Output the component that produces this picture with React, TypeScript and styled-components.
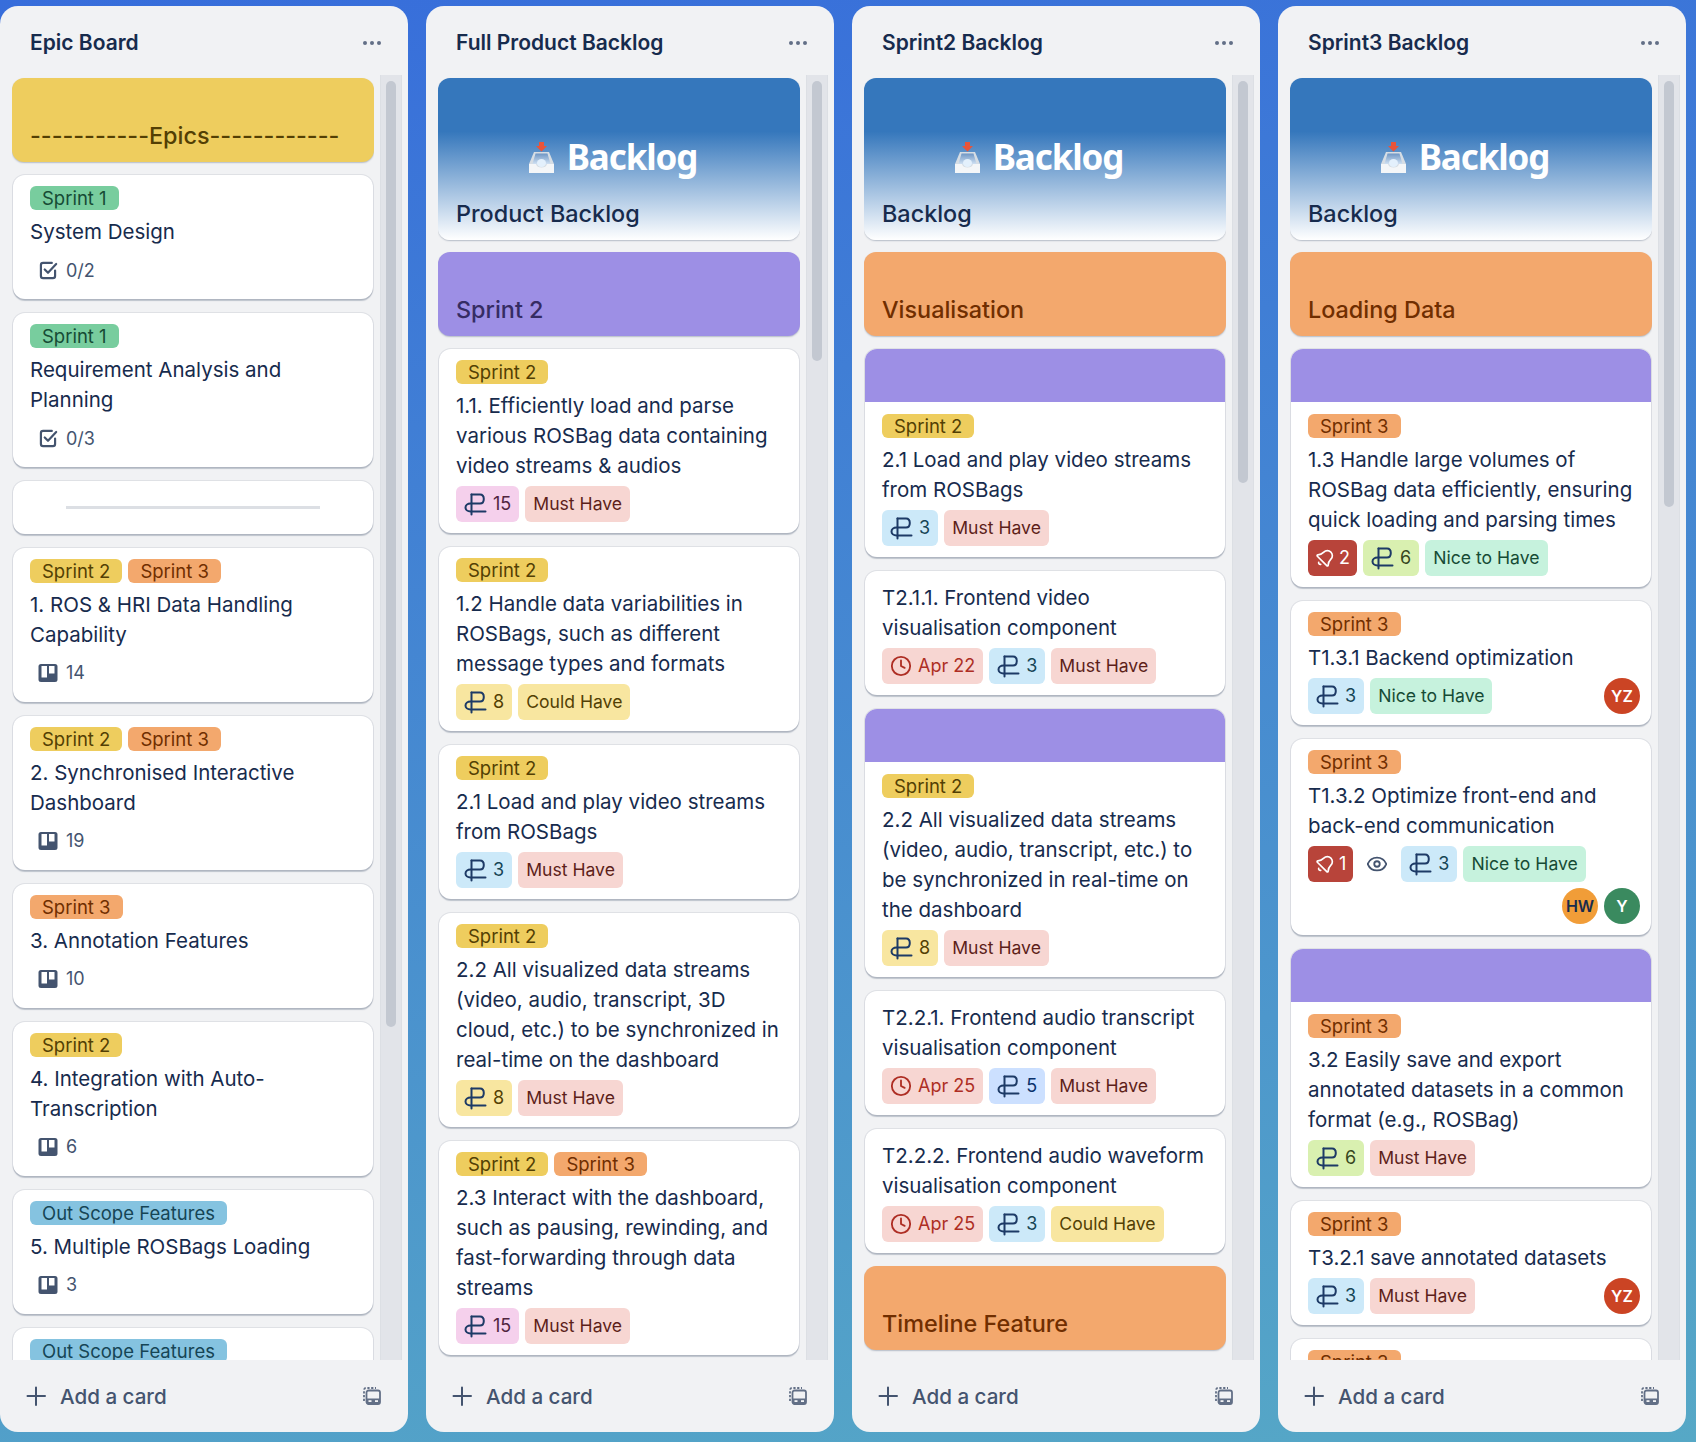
import React from 'react';
import styled, { createGlobalStyle } from 'styled-components';
import { Bell, Clock, Eye } from 'lucide-react';

type LabelTone = 'green' | 'yellow' | 'orange' | 'blue';
type ChipTone = 'pink' | 'blue' | 'green' | 'yellow' | 'periwinkle';
type Priority = 'Must Have' | 'Could Have' | 'Nice to Have';

interface CardData {
  kind?: 'card' | 'front' | 'backlog' | 'divider';
  tone?: 'yellow' | 'purple' | 'orange';
  cover?: boolean;
  labels?: [string, LabelTone][];
  title?: string;
  check?: string;
  board?: string;
  alerts?: string;
  watching?: boolean;
  date?: string;
  estimate?: [string, ChipTone];
  priority?: Priority;
  members?: [string, string, string][];
}

interface ListData {
  name: string;
  thumb: number;
  cards: CardData[];
}

const S1: [string, LabelTone] = ['Sprint 1', 'green'];
const S2: [string, LabelTone] = ['Sprint 2', 'yellow'];
const S3: [string, LabelTone] = ['Sprint 3', 'orange'];
const OUT: [string, LabelTone] = ['Out Scope Features', 'blue'];
const YZ: [string, string, string] = ['YZ', '#cb4424', '#ffffff'];

const lists: ListData[] = [
  {
    name: 'Epic Board',
    thumb: 946,
    cards: [
      { kind: 'front', tone: 'yellow', title: '-----------Epics------------' },
      { labels: [S1], title: 'System Design', check: '0/2' },
      { labels: [S1], title: 'Requirement Analysis and Planning', check: '0/3' },
      { kind: 'divider' },
      { labels: [S2, S3], title: '1. ROS & HRI Data Handling Capability', board: '14' },
      { labels: [S2, S3], title: '2. Synchronised Interactive Dashboard', board: '19' },
      { labels: [S3], title: '3. Annotation Features', board: '10' },
      { labels: [S2], title: '4. Integration with Auto-Transcription', board: '6' },
      { labels: [OUT], title: '5. Multiple ROSBags Loading', board: '3' },
      { labels: [OUT], title: '6. Data Export', board: '3' },
    ],
  },
  {
    name: 'Full Product Backlog',
    thumb: 280,
    cards: [
      { kind: 'backlog', title: 'Product Backlog' },
      { kind: 'front', tone: 'purple', title: 'Sprint 2' },
      { labels: [S2], title: '1.1. Efficiently load and parse various ROSBag data containing video streams & audios', estimate: ['15', 'pink'], priority: 'Must Have' },
      { labels: [S2], title: '1.2 Handle data variabilities in ROSBags, such as different message types and formats', estimate: ['8', 'yellow'], priority: 'Could Have' },
      { labels: [S2], title: '2.1 Load and play video streams from ROSBags', estimate: ['3', 'blue'], priority: 'Must Have' },
      { labels: [S2], title: '2.2 All visualized data streams (video, audio, transcript, 3D cloud, etc.) to be synchronized in real-time on the dashboard', estimate: ['8', 'yellow'], priority: 'Must Have' },
      { labels: [S2, S3], title: '2.3 Interact with the dashboard, such as pausing, rewinding, and fast-forwarding through data streams', estimate: ['15', 'pink'], priority: 'Must Have' },
    ],
  },
  {
    name: 'Sprint2 Backlog',
    thumb: 402,
    cards: [
      { kind: 'backlog', title: 'Backlog' },
      { kind: 'front', tone: 'orange', title: 'Visualisation' },
      { cover: true, labels: [S2], title: '2.1 Load and play video streams from ROSBags', estimate: ['3', 'blue'], priority: 'Must Have' },
      { title: 'T2.1.1. Frontend video visualisation component', date: 'Apr 22', estimate: ['3', 'blue'], priority: 'Must Have' },
      { cover: true, labels: [S2], title: '2.2 All visualized data streams (video, audio, transcript, etc.) to be synchronized in real-time on the dashboard', estimate: ['8', 'yellow'], priority: 'Must Have' },
      { title: 'T2.2.1. Frontend audio transcript visualisation component', date: 'Apr 25', estimate: ['5', 'periwinkle'], priority: 'Must Have' },
      { title: 'T2.2.2. Frontend audio waveform visualisation component', date: 'Apr 25', estimate: ['3', 'blue'], priority: 'Could Have' },
      { kind: 'front', tone: 'orange', title: 'Timeline Feature' },
    ],
  },
  {
    name: 'Sprint3 Backlog',
    thumb: 426,
    cards: [
      { kind: 'backlog', title: 'Backlog' },
      { kind: 'front', tone: 'orange', title: 'Loading Data' },
      { cover: true, labels: [S3], title: '1.3 Handle large volumes of ROSBag data efficiently, ensuring quick loading and parsing times', alerts: '2', estimate: ['6', 'green'], priority: 'Nice to Have' },
      { labels: [S3], title: 'T1.3.1 Backend optimization', estimate: ['3', 'blue'], priority: 'Nice to Have', members: [YZ] },
      { labels: [S3], title: 'T1.3.2 Optimize front-end and back-end communication', alerts: '1', watching: true, estimate: ['3', 'blue'], priority: 'Nice to Have', members: [['HW', '#f19d38', '#172b4d'], ['Y', '#3a8a5f', '#ffffff']] },
      { cover: true, labels: [S3], title: '3.2 Easily save and export annotated datasets in a common format (e.g., ROSBag)', estimate: ['6', 'green'], priority: 'Must Have' },
      { labels: [S3], title: 'T3.2.1 save annotated datasets', estimate: ['3', 'blue'], priority: 'Must Have', members: [YZ] },
      { labels: [S3], title: 'T3.2.2 export annotated datasets', estimate: ['3', 'blue'], priority: 'Must Have' },
    ],
  },
];

const labelColors: Record<LabelTone, [string, string]> = {
  green: ['#78cd9e', '#164b35'],
  yellow: ['#eecd5e', '#533f04'],
  orange: ['#f3a86d', '#702e00'],
  blue: ['#85c3e0', '#164555'],
};

const chipColors: Record<ChipTone, [string, string]> = {
  pink: ['#f5d0ec', '#50253f'],
  blue: ['#cce9f9', '#164555'],
  green: ['#d9f0b0', '#37471f'],
  yellow: ['#f8e6a0', '#533f04'],
  periwinkle: ['#cce0ff', '#09326c'],
};

const priorityColors: Record<Priority, [string, string]> = {
  'Must Have': ['#f7d6d2', '#5d1f1a'],
  'Could Have': ['#f8e6a0', '#533f04'],
  'Nice to Have': ['#c6f2dd', '#164b35'],
};

const frontColors = {
  yellow: ['#eecd5e', '#533f04'],
  purple: ['#9d8fe5', '#352c63'],
  orange: ['#f3a86d', '#702e00'],
};

const GlobalStyle = createGlobalStyle`
  html, body {
    margin: 0;
    padding: 0;
  }
  body {
    font-family: Inter, "Liberation Sans", sans-serif;
    font-feature-settings: "calt" 0;
    color: #172b4d;
  }
`;

const Board = styled.div`
  display: flex;
  gap: 18px;
  box-sizing: border-box;
  width: 1696px;
  height: 1442px;
  padding: 6px 10px 10px 0;
  overflow: hidden;
  background: linear-gradient(172deg, #376ddb 0%, #56a8c6 100%);
`;

const Column = styled.section`
  display: flex;
  flex-direction: column;
  flex: 0 0 408px;
  height: 100%;
  border-radius: 18px;
  background: #f1f2f4;
  overflow: hidden;
`;

const ColumnHeader = styled.header`
  display: flex;
  align-items: center;
  justify-content: space-between;
  flex: 0 0 auto;
  box-sizing: border-box;
  height: 69px;
  padding: 4px 27px 0 30px;
`;

const ColumnTitle = styled.h2`
  margin: 0;
  font-size: 21px;
  line-height: 30px;
  font-weight: 600;
  color: #172b4d;
`;

const Dots = styled.span`
  display: flex;
  gap: 3px;
  & > i {
    width: 4px;
    height: 4px;
    border-radius: 50%;
    background: #626f86;
  }
`;

const ColumnBody = styled.div`
  display: flex;
  flex: 1 1 0;
  min-height: 0;
  gap: 6px;
  padding: 0 6px 0 12px;
`;

const CardStack = styled.div`
  display: flex;
  flex-direction: column;
  flex: 0 0 362px;
  gap: 12px;
  padding-top: 3px;
  overflow: hidden;
`;

const ScrollTrack = styled.div`
  flex: 0 0 22px;
  box-sizing: border-box;
  padding: 6px 5px 0;
  background: #e2e4e9;
  border-left: 1px solid #dcdfe4;
  border-right: 1px solid #dcdfe4;
`;

const ScrollThumb = styled.div`
  border-radius: 6px;
  background: #c3c8d1;
`;

const CardShell = styled.article`
  flex: 0 0 auto;
  margin: 1px;
  border-radius: 12px;
  background: #ffffff;
  overflow: hidden;
  box-shadow: 0 0 0 1px #091e4214, 0 1.5px 1px #091e4238;
`;

const FrontCard = styled(CardShell)<{ $bg: string; $fg: string }>`
  box-sizing: border-box;
  height: 84px;
  margin: 0;
  padding: 43px 18px 11px;
  background: ${({ $bg }) => $bg};
  color: ${({ $fg }) => $fg};
  font-size: 23.4px;
  line-height: 30px;
  font-weight: 500;
  white-space: nowrap;
  box-shadow: 0 1px 1.5px #091e4240;
`;

const BacklogCard = styled(CardShell)`
  display: flex;
  flex-direction: column;
  box-sizing: border-box;
  height: 162px;
  margin: 0;
  padding: 57px 18px 11px;
  background: linear-gradient(180deg, #3577bc 0%, #3577bc 33%, #ffffff 100%);
  font-size: 23.4px;
  line-height: 30px;
  font-weight: 500;
  color: #172b4d;
  box-shadow: 0 1px 1.5px #091e4240;
`;

const BacklogMark = styled.div`
  display: flex;
  align-items: center;
  justify-content: center;
  gap: 12px;
  height: 44px;
  margin-bottom: 20px;
  padding-right: 13px;
  font-family: "Noto Sans", sans-serif;
  font-size: 35px;
  line-height: 44px;
  font-weight: 700;
  letter-spacing: -1.1px;
  color: #ffffff;
`;

const DividerCard = styled(CardShell)`
  display: flex;
  justify-content: center;
  padding: 25px 0;
`;

const DividerLine = styled.div`
  width: 254px;
  height: 2.5px;
  background: #dcdfe4;
`;

const CoverBand = styled.div`
  height: 53px;
  margin-bottom: 1px;
  background: #9d8fe5;
`;

const CardBody = styled.div`
  display: flex;
  flex-direction: column;
  gap: 6px;
  padding: 11px 11px 11px 17px;
`;

const LabelRow = styled.div`
  display: flex;
  gap: 6px;
`;

const Label = styled.span<{ $tone: LabelTone }>`
  height: 24px;
  padding: 0 12px;
  border-radius: 6px;
  font-size: 18.5px;
  line-height: 24px;
  background: ${({ $tone }) => labelColors[$tone][0]};
  color: ${({ $tone }) => labelColors[$tone][1]};
`;

const CardTitle = styled.div`
  padding: 1px 6px 0 0;
  margin-bottom: -1px;
  font-size: 20.5px;
  line-height: 30px;
  color: #172b4d;
`;

const BadgeRow = styled.div`
  display: flex;
  flex-wrap: wrap;
  gap: 6px;
`;

const Chip = styled.span<{ $bg: string; $fg: string }>`
  display: inline-flex;
  align-items: center;
  gap: 6px;
  height: 36px;
  padding: 0 8px;
  border-radius: 6px;
  font-size: 18px;
  line-height: 24px;
  background: ${({ $bg }) => $bg};
  color: ${({ $fg }) => $fg};
`;

const PriorityChip = styled(Chip)`
  font-size: 17.6px;
`;

const AlertChip = styled(Chip)`
  gap: 4px;
  padding: 0 7px;
`;

const Stat = styled.span`
  display: inline-flex;
  align-items: center;
  gap: 6px;
  height: 36px;
  padding-left: 6px;
  font-size: 18px;
  color: #44546f;
`;

const Watch = styled.span`
  display: inline-flex;
  align-items: center;
  justify-content: center;
  width: 36px;
  height: 36px;
  color: #44546f;
`;

const Members = styled.div`
  display: flex;
  gap: 6px;
  margin-left: auto;
`;

const Avatar = styled.span<{ $bg: string; $fg: string }>`
  display: flex;
  align-items: center;
  justify-content: center;
  width: 36px;
  height: 36px;
  border-radius: 50%;
  font-size: 16px;
  font-weight: 600;
  background: ${({ $bg }) => $bg};
  color: ${({ $fg }) => $fg};
`;

const ColumnFooter = styled.footer`
  display: flex;
  align-items: center;
  flex: 0 0 auto;
  gap: 9px;
  height: 72px;
  padding: 0 27px 0 21px;
  font-size: 20.6px;
  font-weight: 500;
  color: #44546f;
`;

const AddText = styled.span`
  flex: 1;
`;

const BellIcon = styled(Bell)`
  transform: rotate(45deg);
`;

const ChecklistIcon = () => (
  <svg width="24" height="24" viewBox="1 1 22 22" fill="none" stroke="#44546f" strokeWidth="2" strokeLinecap="round" strokeLinejoin="round">
    <path d="M18.5 12.5v5a2 2 0 0 1-2 2h-9a2 2 0 0 1-2-2v-10a2 2 0 0 1 2-2h8" />
    <path d="M9 11.5l3 3 7.5-8" />
  </svg>
);

const BoardIcon = () => (
  <svg width="24" height="24" viewBox="0 0 24 24">
    <path fill="#44546f" fillRule="evenodd" d="M5 3h14a2.5 2.5 0 0 1 2.500 2.500v13a2.500 2.500 0 0 1-2.500 2.500h-14a2.500 2.500 0 0 1-2.500-2.500v-13a2.500 2.500 0 0 1 2.500-2.500zM5.500 5v11.500h5.500v-11.500zM13 5v7.500h5.500v-7.500z" />
  </svg>
);

const EstimateIcon = () => (
  <svg width="23" height="24" viewBox="0 0 23 24" fill="none" stroke="#1d3a66" strokeWidth="2" strokeLinecap="round" strokeLinejoin="round">
    <path d="M7.500 2.500h8.500c2.300 0 3.800 1.800 3.800 4.500s-1.500 4.500-3.800 4.500h-9.500c-3 0-5 1.800-5 4s2 4 5 4h15" />
    <path d="M7.500 2.500v20" />
  </svg>
);

const InboxIcon = () => (
  <svg width="27" height="31" viewBox="0 0 27 31">
    <defs>
      <linearGradient id="inbox-well" x1="0" y1="0" x2="0" y2="1">
        <stop offset="0" stopColor="#6f96c4" />
        <stop offset="1" stopColor="#cfe0f2" />
      </linearGradient>
    </defs>
    <path fill="#e8543a" d="M11 0h5v4h3l-5.500 5.500-5.500-5.500h3z" />
    <path fill="#d6dde4" d="M6 10h15l5 12v9h-25v-9z" />
    <path fill="url(#inbox-well)" d="M7.500 11.500h12l3 10.500h-18z" />
    <ellipse cx="13.500" cy="21" rx="4.500" ry="4" fill="#e3f0fc" />
    <path fill="#f4f6f8" d="M1 22h7c.5 2.500 2.500 3.500 5.500 3.500s5-1 5.500-3.500h7v9h-25z" />
  </svg>
);

const PlusIcon = () => (
  <svg width="30" height="30" viewBox="0 0 30 30" fill="none" stroke="#44546f" strokeWidth="2" strokeLinecap="round">
    <path d="M15 6.500v17.500M6.500 15h17.500" />
  </svg>
);

const TemplateIcon = () => (
  <svg width="18" height="18" viewBox="0 0 18 18" fill="none">
    <path stroke="#626f86" strokeWidth="1.800" strokeDasharray="2.200 1.600" d="M1 14V3a2 2 0 0 1 2-2h10" />
    <rect x="3.500" y="3.500" width="13.500" height="13.500" rx="2" stroke="#626f86" strokeWidth="1.800" />
    <path fill="#626f86" d="M3.500 11.500h13.500v3.500a2 2 0 0 1-2 2h-9.500a2 2 0 0 1-2-2z" />
    <rect x="5.500" y="13.200" width="3" height="1.800" fill="#f1f2f4" />
    <rect x="12" y="13.200" width="3" height="1.800" fill="#f1f2f4" />
  </svg>
);

const Task: React.FC<{ card: CardData }> = ({ card }) => {
  const hasBadges = card.check || card.board || card.alerts || card.date || card.estimate || card.priority;
  return (
    <CardShell>
      {card.cover && <CoverBand />}
      <CardBody>
        {card.labels && (
          <LabelRow>
            {card.labels.map(([text, tone]) => (
              <Label key={text} $tone={tone}>{text}</Label>
            ))}
          </LabelRow>
        )}
        <CardTitle>{card.title}</CardTitle>
        {hasBadges && (
          <BadgeRow>
            {card.check && <Stat><ChecklistIcon />{card.check}</Stat>}
            {card.board && <Stat><BoardIcon />{card.board}</Stat>}
            {card.alerts && (
              <AlertChip $bg="#b8443a" $fg="#ffffff">
                <BellIcon size={20} strokeWidth={2} />
                {card.alerts}
              </AlertChip>
            )}
            {card.watching && <Watch><Eye size={22} strokeWidth={2} /></Watch>}
            {card.date && (
              <Chip $bg="#f7d6d2" $fg="#ae2e24">
                <Clock size={22} strokeWidth={2} />
                {card.date}
              </Chip>
            )}
            {card.estimate && (
              <Chip $bg={chipColors[card.estimate[1]][0]} $fg={chipColors[card.estimate[1]][1]}>
                <EstimateIcon />
                {card.estimate[0]}
              </Chip>
            )}
            {card.priority && (
              <PriorityChip $bg={priorityColors[card.priority][0]} $fg={priorityColors[card.priority][1]}>
                {card.priority}
              </PriorityChip>
            )}
            {card.members && (
              <Members>
                {card.members.map(([initials, bg, fg]) => (
                  <Avatar key={initials} $bg={bg} $fg={fg}>{initials}</Avatar>
                ))}
              </Members>
            )}
          </BadgeRow>
        )}
      </CardBody>
    </CardShell>
  );
};

const renderCard = (card: CardData, index: number) => {
  if (card.kind === 'divider') {
    return <DividerCard key={index}><DividerLine /></DividerCard>;
  }
  if (card.kind === 'backlog') {
    return (
      <BacklogCard key={index}>
        <BacklogMark><InboxIcon />Backlog</BacklogMark>
        {card.title}
      </BacklogCard>
    );
  }
  if (card.kind === 'front') {
    const [bg, fg] = frontColors[card.tone ?? 'yellow'];
    return <FrontCard key={index} $bg={bg} $fg={fg}>{card.title}</FrontCard>;
  }
  return <Task key={index} card={card} />;
};

export default function App() {
  return (
    <>
      <GlobalStyle />
      <Board>
        {lists.map((list) => (
          <Column key={list.name}>
            <ColumnHeader>
              <ColumnTitle>{list.name}</ColumnTitle>
              <Dots><i /><i /><i /></Dots>
            </ColumnHeader>
            <ColumnBody>
              <CardStack>{list.cards.map(renderCard)}</CardStack>
              <ScrollTrack>
                <ScrollThumb style={{ height: list.thumb }} />
              </ScrollTrack>
            </ColumnBody>
            <ColumnFooter>
              <PlusIcon />
              <AddText>Add a card</AddText>
              <TemplateIcon />
            </ColumnFooter>
          </Column>
        ))}
      </Board>
    </>
  );
}
